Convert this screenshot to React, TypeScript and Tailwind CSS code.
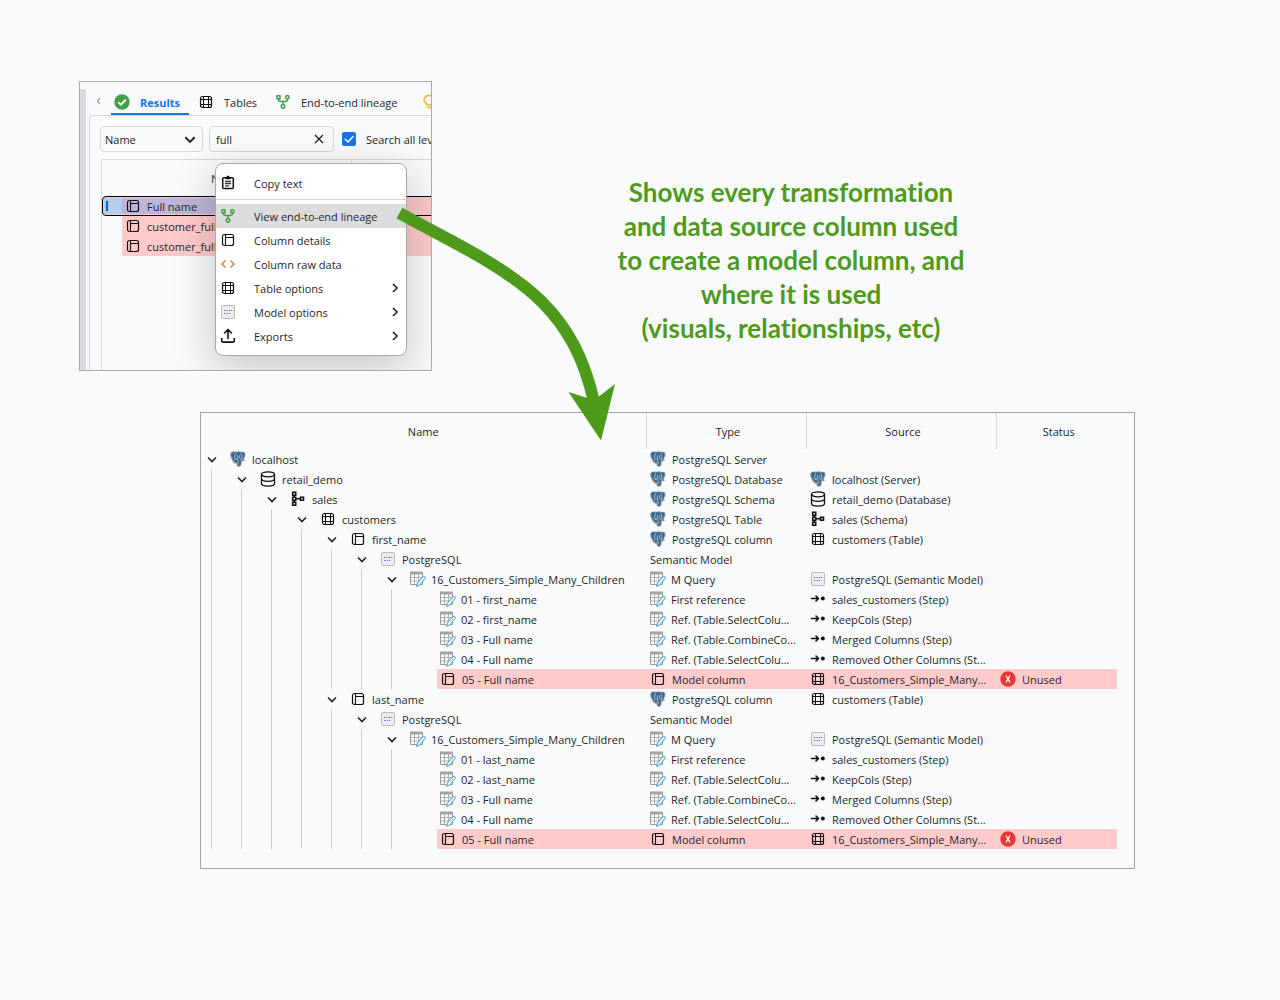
import React, { useState } from "react";

type IconName =
  | "postgres" | "database" | "schema" | "table" | "column" | "model"
  | "query" | "step" | "unused" | "clipboard" | "lineage" | "code" | "export";

function Icon({ name }: { name: IconName }) {
  const line = { fill: "none", stroke: "#111", strokeWidth: 1.3, strokeLinecap: "round" as const, strokeLinejoin: "round" as const };
  if (name === "postgres") {
    return (
      <svg viewBox="0 0 16 16" className="size-4 shrink-0" aria-hidden="true">
        <path d="M1 1.5C2.4.2 4.600.2 6 .8 8 .1 10 .1 11.300.9 13.300.3 15.300 1 15.400 3c0 2-1 4-1.900 5.400.8.3 1.800.2 1.500.8-.7 1-2.300 1.300-3.300.9-.1 2 .1 5.200-2.200 5.600-2.300.4-2.900-1-3.100-3.100-.9.3-1.800.1-2.300-.6C2.400 10.500.2 6 .2 3.800.2 2.900.4 2 1 1.500Z" fill="#8d9499" />
        <path d="M1.500 2.100c1.300-1.200 3-.9 4.300-.3C7.800 1 9.700 1 11.100 1.800c1.500-.5 3.300-.2 3.400 1.400.1 1.800-1.100 4.200-2.200 5.700-1.300.2-1.600.8-1.600 1.500 0 2 0 4.200-1.400 4.400-1.600.2-1.900-1-2-3.900-.7.5-1.700.7-2.100.2C3.600 8.900 1.200 5.700 1.200 3.600c0-.6 0-1.200.3-1.500Z" fill="#336791" />
        <path d="M5.600 2.200C4.300 4.200 4.800 7 4.900 8.400M7.500 4.200v2.600c0 1.200-1 1.800-2.400 1.700M10.600 2.200c1.600 1.700 1.500 4.200.9 6.300M7.500 7.400c.6 1.400.4 4.300.8 5.900M9.500 4.300c-.1 1.900.1 3.300 1.400 4.400" fill="none" stroke="#c4d1dc" strokeWidth=".8" />
      </svg>
    );
  }
  if (name === "database") {
    return (
      <svg viewBox="0 0 16 16" className="size-4 shrink-0" aria-hidden="true">
        <g {...line}>
          <ellipse cx="8" cy="3.300" rx="6.500" ry="2.500" />
          <path d="M1.500 3.300v9.200c0 1.400 2.900 2.600 6.500 2.600s6.500-1.200 6.500-2.600V3.300M1.500 7.800c0 1.400 2.900 2.500 6.500 2.500s6.500-1.100 6.500-2.500" />
        </g>
      </svg>
    );
  }
  if (name === "schema") {
    return (
      <svg viewBox="0 0 16 16" className="size-4 shrink-0" aria-hidden="true">
        <g {...line} strokeWidth={1.600} strokeLinejoin="miter">
          <path d="M2.700 1.300h3v3h-3zM2.700 6.300h3v3h-3zM2.700 11.300h3v3h-3zM10.500 6.300h3v3h-3zM4.200 4.300v2M4.200 9.300v2M5.700 7.800h4.800" />
        </g>
      </svg>
    );
  }
  if (name === "table") {
    return (
      <svg viewBox="0 0 16 16" className="size-4 shrink-0" aria-hidden="true">
        <rect x="2.500" y="2.500" width="11" height="11" rx="2" {...line} strokeWidth={1.200} />
        <path d="M5.500 2.500v11M10.500 2.500v11M2.500 5.500h11M2.500 10.500h11" {...line} strokeWidth={1} />
      </svg>
    );
  }
  if (name === "column") {
    return (
      <svg viewBox="0 0 16 16" className="size-4 shrink-0" aria-hidden="true">
        <rect x="2.500" y="2.500" width="11" height="11" rx="2" {...line} strokeWidth={1.200} />
        <path d="M5.500 2.500v11M5.500 5.500h8" {...line} strokeWidth={1.100} />
      </svg>
    );
  }
  if (name === "model") {
    return (
      <svg viewBox="0 0 16 16" className="size-4 shrink-0" aria-hidden="true">
        <rect x="1.500" y="1.500" width="13" height="13" rx="1.500" fill="#ededee" stroke="#bcbcbe" />
        <path d="M4 6.500h1.200M6.500 6.500h1.200M9 6.500h1.200M11.200 6.500h1M4 9.500h1.200M6.500 9.500h1.200M9 9.500h1.200" stroke="#6a55c0" strokeWidth="1.200" />
      </svg>
    );
  }
  if (name === "query") {
    return (
      <svg viewBox="0 0 16 16" className="size-4 shrink-0" aria-hidden="true">
        <path d="M.5 1.500h12v12H.5z" fill="#fff" stroke="#9a9a9a" />
        <path d="M0 .5h13v3H0z" fill="#a3a3a3" />
        <path d="M4.500 3v10.500M8.500 3v10.500M.5 6.500h12M.5 10h12" stroke="#a5a5a5" strokeWidth=".9" />
        <path d="m6.600 15.400.7-3.200 5.800-6.800c.8-.8 2.900.6 2.100 1.800l-5.700 7.100Z" fill="#e6f5fc" stroke="#3f9fcb" />
      </svg>
    );
  }
  if (name === "step") {
    return (
      <svg viewBox="0 0 16 16" className="size-4 shrink-0" aria-hidden="true">
        <path d="M1.500 7.500h7M6 5 8.500 7.500 6 10" {...line} strokeWidth={1.600} />
        <circle cx="12.800" cy="7.500" r="2" fill="#111" />
      </svg>
    );
  }
  if (name === "unused") {
    return (
      <svg viewBox="0 0 16 16" className="size-4 shrink-0" aria-hidden="true">
        <circle cx="8" cy="8" r="7.700" fill="#e53935" />
        <path d="m6 4.500 4 7M10 4.500l-4 7" stroke="#fff" strokeWidth="1.300" />
      </svg>
    );
  }
  if (name === "clipboard") {
    return (
      <svg viewBox="0 0 16 16" className="size-4 shrink-0" aria-hidden="true">
        <rect x="2.700" y="2.800" width="10.600" height="10.800" rx="1" {...line} strokeWidth={1.500} />
        <path d="M5.500 1.800h5v2.400h-5zM7 .8h2v2H7z" fill="#111" />
        <path d="M5 6.300h6M5 8.500h6M5 10.800h4" stroke="#333" strokeWidth="1.300" />
      </svg>
    );
  }
  if (name === "lineage") {
    return (
      <svg viewBox="0 0 16 16" className="size-4 shrink-0" aria-hidden="true">
        <g fill="none" stroke="#43a047" strokeWidth="1.500">
          <path d="M2 1.700h3v3H2zM3.500 4.700v.8c0 1.500 1 2 2.300 2h4.400c1.300 0 2.300-.5 2.300-2v-.8M8 7.500v3" />
          <circle cx="12.300" cy="3.200" r="1.700" />
          <circle cx="8" cy="12.300" r="1.800" />
        </g>
      </svg>
    );
  }
  if (name === "code") {
    return (
      <svg viewBox="0 0 16 16" className="size-4 shrink-0" aria-hidden="true">
        <path d="M5.500 4.500 2 8l3.500 3.500M10.500 4.500 14 8l-3.500 3.500" fill="none" stroke="#d9833b" strokeWidth="1.500" />
      </svg>
    );
  }
  return (
    <svg viewBox="0 0 16 16" className="size-4 shrink-0" aria-hidden="true">
      <path d="M8 10.500V1.800M4.500 5 8 1.500 11.500 5M1.700 10.500v2.200c0 .9.500 1.400 1.400 1.400h9.800c.9 0 1.400-.5 1.400-1.400v-2.200" {...line} strokeWidth={1.600} />
    </svg>
  );
}

function Chevron({ dir, size }: { dir: "down" | "right" | "left"; size: "sm" | "md" }) {
  const d = dir === "down" ? "M2 4.500 6 8.500 10 4.500" : dir === "right" ? "M4 2 8 6 4 10" : "M7 3 4.500 6 7 9";
  return (
    <svg viewBox="0 0 12 12" className={size === "sm" ? "size-3 shrink-0" : "size-3.5 shrink-0"} aria-hidden="true">
      <path d={d} fill="none" stroke={dir === "left" ? "#8a8a8a" : "#222"} strokeWidth={dir === "left" ? 1.1 : 1.600} />
    </svg>
  );
}

type Entry = { icon?: IconName; text: string };
type Row = { depth: number; name: Entry; type: Entry; source?: Entry; unused?: boolean };

function branch(column: string): Row[] {
  const step = (n: string, type: string, source: string): Row => ({
    depth: 7,
    name: { icon: "query", text: n },
    type: { icon: "query", text: type },
    source: { icon: "step", text: source },
  });
  return [
    { depth: 4, name: { icon: "column", text: column }, type: { icon: "postgres", text: "PostgreSQL column" }, source: { icon: "table", text: "customers (Table)" } },
    { depth: 5, name: { icon: "model", text: "PostgreSQL" }, type: { text: "Semantic Model" } },
    { depth: 6, name: { icon: "query", text: "16_Customers_Simple_Many_Children" }, type: { icon: "query", text: "M Query" }, source: { icon: "model", text: "PostgreSQL (Semantic Model)" } },
    step(`01 - ${column}`, "First reference", "sales_customers (Step)"),
    step(`02 - ${column}`, "Ref. (Table.SelectColu...", "KeepCols (Step)"),
    step("03 - Full name", "Ref. (Table.CombineCo...", "Merged Columns (Step)"),
    step("04 - Full name", "Ref. (Table.SelectColu...", "Removed Other Columns (St..."),
    { depth: 7, name: { icon: "column", text: "05 - Full name" }, type: { icon: "column", text: "Model column" }, source: { icon: "table", text: "16_Customers_Simple_Many..." }, unused: true },
  ];
}

const rows: Row[] = [
  { depth: 0, name: { icon: "postgres", text: "localhost" }, type: { icon: "postgres", text: "PostgreSQL Server" } },
  { depth: 1, name: { icon: "database", text: "retail_demo" }, type: { icon: "postgres", text: "PostgreSQL Database" }, source: { icon: "postgres", text: "localhost (Server)" } },
  { depth: 2, name: { icon: "schema", text: "sales" }, type: { icon: "postgres", text: "PostgreSQL Schema" }, source: { icon: "database", text: "retail_demo (Database)" } },
  { depth: 3, name: { icon: "table", text: "customers" }, type: { icon: "postgres", text: "PostgreSQL Table" }, source: { icon: "schema", text: "sales (Schema)" } },
  ...branch("first_name"),
  ...branch("last_name"),
];

function Label({ entry }: { entry: Entry }) {
  return (
    <span className={entry.icon === "query" ? "flex items-center gap-[5px]" : "flex items-center gap-1.5"}>
      {entry.icon && <Icon name={entry.icon} />}
      <span className="pt-px">{entry.text}</span>
    </span>
  );
}

function LineageTable() {
  return (
    <table className="w-full table-fixed border-collapse">
      <colgroup>
        <col />
        <col className="w-40" />
        <col className="w-[190px]" />
        <col className="w-[121px]" />
      </colgroup>
      <thead>
        <tr className="h-9">
          <th scope="col" className="p-0 pt-0.5 font-normal">Name</th>
          <th scope="col" className="border-l border-[#d5d7da] p-0 pt-0.5 pl-1 font-normal">Type</th>
          <th scope="col" className="border-l border-[#d5d7da] p-0 pt-0.5 pl-1 font-normal">Source</th>
          <th scope="col" className="border-l border-[#d5d7da] p-0 pt-0.5 pl-1 font-normal">Status</th>
        </tr>
      </thead>
      <tbody>
        {rows.map((row, i) => {
          const tint = row.unused ? "h-5 bg-[#ffcaca] p-0 pl-1 whitespace-nowrap" : "h-5 p-0 pl-1 whitespace-nowrap";
          return (
            <tr key={i}>
              <td className="h-5 p-0">
                <div className="flex h-5">
                  {Array.from({ length: row.depth }, (_, g) => (
                    <span key={g} className="flex w-[30px] shrink-0 pl-[10px]">
                      <span className="w-px bg-[#c9cbce]" />
                    </span>
                  ))}
                  <span className="flex w-[26px] shrink-0 items-center pl-[5px]">
                    {row.depth < 7 && (
                      <button type="button" aria-label={`Collapse ${row.name.text}`} aria-expanded="true">
                        <Chevron dir="down" size="sm" />
                      </button>
                    )}
                  </span>
                  <span className={row.unused ? "flex flex-1 items-center bg-[#ffcaca] pl-[3px] whitespace-nowrap" : "flex flex-1 items-center pl-[3px] whitespace-nowrap"}>
                    <Label entry={row.name} />
                  </span>
                </div>
              </td>
              <td className={tint}><Label entry={row.type} /></td>
              <td className={tint}>{row.source && <Label entry={row.source} />}</td>
              <td className={tint}>{row.unused && <Label entry={{ icon: "unused", text: "Unused" }} />}</td>
            </tr>
          );
        })}
      </tbody>
    </table>
  );
}

const menuItems: { icon: IconName; text: string; active?: boolean; sub?: boolean }[] = [
  { icon: "lineage", text: "View end-to-end lineage", active: true },
  { icon: "column", text: "Column details" },
  { icon: "code", text: "Column raw data" },
  { icon: "table", text: "Table options", sub: true },
  { icon: "model", text: "Model options", sub: true },
  { icon: "export", text: "Exports", sub: true },
];

function ContextMenu() {
  return (
    <div role="menu" className="absolute top-[81px] left-[135px] w-48 rounded-lg border border-[#a9a9a9] bg-white py-[7px] shadow-[0_12px_40px_4px_rgba(0,0,0,0.18)]">
      <button type="button" role="menuitem" className="flex h-6 w-full items-center gap-[18px] pl-1">
        <Icon name="clipboard" />
        <span className="pt-px">Copy text</span>
      </button>
      <hr className="mt-1 mb-1 border-[#d6d6d6]" />
      {menuItems.map((m) => (
        <button
          key={m.text}
          type="button"
          role="menuitem"
          className={m.active ? "flex h-6 w-full items-center gap-[18px] bg-[#dcdcdc] pl-1 whitespace-nowrap" : "flex h-6 w-full items-center gap-[18px] pr-[5px] pl-1 whitespace-nowrap"}
        >
          <Icon name={m.icon} />
          <span className="flex-1 pt-px text-left">{m.text}</span>
          {m.sub && <Chevron dir="right" size="sm" />}
        </button>
      ))}
    </div>
  );
}

function SearchPanel() {
  const [query, setQuery] = useState("full");
  const [all, setAll] = useState(true);
  return (
    <section aria-label="Search results" className="relative flex h-[290px] w-[353px] shrink-0 overflow-hidden border border-[#a9abae]">
      <div className="mt-[7px] w-1.5 shrink-0 bg-[#d9dadd]" />
      <div className="ml-[3px] flex shrink-0 flex-col">
        <div role="tablist" className="flex h-[33px] shrink-0 items-end whitespace-nowrap">
          <button type="button" aria-label="Scroll tabs left" className="mr-1.5 mb-2 ml-1">
            <Chevron dir="left" size="sm" />
          </button>
          <button type="button" role="tab" aria-selected="true" className="flex h-6 w-[78px] items-center gap-2.5 border-b-2 border-[#1a73e8] pl-[3px] font-bold text-[#1a73e8]">
            <svg viewBox="0 0 16 16" className="size-4 shrink-0" aria-hidden="true">
              <circle cx="8" cy="8" r="7.700" fill="#43a047" />
              <path d="m4.300 8.200 2.600 2.500 4.800-5" fill="none" stroke="#fff" strokeWidth="2" />
            </svg>
            <span className="pt-px">Results</span>
          </button>
          <button type="button" role="tab" aria-selected="false" className="flex h-6 w-[78px] items-center gap-2.5 pb-0.5 pl-[9px]">
            <Icon name="table" />
            <span className="pt-px">Tables</span>
          </button>
          <button type="button" role="tab" aria-selected="false" className="flex h-6 w-[148px] items-center gap-2.5 pb-0.5 pl-2">
            <Icon name="lineage" />
            <span className="pt-px">End-to-end lineage</span>
          </button>
          <button type="button" role="tab" aria-selected="false" aria-label="Tips" className="flex h-6 items-center pb-0.5 pl-1.5">
            <svg viewBox="0 0 16 16" className="size-4" aria-hidden="true">
              <path d="M6 11c0-1.600-3-2.400-3-5.200A4.600 4.600 0 0 1 8 1.500a4.600 4.600 0 0 1 5 4.300C13 8.600 10 9.400 10 11ZM6 13.500h4" fill="none" stroke="#f5b72e" strokeWidth="1.500" />
            </svg>
          </button>
        </div>
        <div className="w-[420px] flex-1 rounded-tl border-t border-l border-[#d5d7da] pt-2.5 pl-2.5">
          <div className="flex h-[26px] items-center whitespace-nowrap">
            <div className="relative h-full w-[103px]">
              <select aria-label="Search field" defaultValue="Name" className="h-full w-full appearance-none rounded border border-[#d5d7da] bg-transparent pt-px pl-1">
                <option>Name</option>
              </select>
              <span className="pointer-events-none absolute top-1.5 right-1.5">
                <Chevron dir="down" size="md" />
              </span>
            </div>
            <div className="ml-1.5 flex h-full w-[125px] items-center rounded border border-[#d5d7da] pr-2 pl-1.5">
              <input aria-label="Search text" value={query} onChange={(e) => setQuery(e.target.value)} className="min-w-0 flex-1 bg-transparent pt-px outline-none" />
              <button type="button" aria-label="Clear search" onClick={() => setQuery("")}>
                <svg viewBox="0 0 12 12" className="size-3" aria-hidden="true">
                  <path d="m2 2 8 8M10 2l-8 8" stroke="#222" strokeWidth="1.400" />
                </svg>
              </button>
            </div>
            <label className="relative ml-2 flex items-center gap-2.5">
              <input type="checkbox" checked={all} onChange={(e) => setAll(e.target.checked)} className="size-3.5 appearance-none rounded-xs border border-[#1a73e8] checked:bg-[#1a73e8]" />
              <svg viewBox="0 0 14 14" className="pointer-events-none absolute left-0 size-3.5" aria-hidden="true">
                <path d="m3 7 3 3 5.500-6" fill="none" stroke="#fff" strokeWidth="1.500" />
              </svg>
              <span className="pt-px">Search all levels</span>
            </label>
          </div>
          <div className="mt-[7px] ml-px h-[230px] w-[400px] border-t border-l border-[#d5d7da]">
            <div className="flex h-9">
              <div className="flex w-[250px] items-center justify-center border-r border-[#d5d7da] pt-0.5">Name</div>
            </div>
            <div className="flex h-5 rounded border border-black bg-[#fac8c8] p-px">
              <div className="flex w-[18px] items-center bg-[#b3cef0] pl-0.5">
                <span className="h-2.5 w-0.5 bg-[#0067c0]" />
              </div>
              <div className="flex w-[230px] items-center bg-[#bdb5d8] pl-[3px]">
                <Label entry={{ icon: "column", text: "Full name" }} />
              </div>
            </div>
            {["customer_full_name", "customer_full_name"].map((t, i) => (
              <div key={i} className="ml-5 flex h-5 items-center bg-[#ffcaca] pl-[3px]">
                <Label entry={{ icon: "column", text: t }} />
              </div>
            ))}
          </div>
        </div>
      </div>
      <ContextMenu />
    </section>
  );
}

export default function App() {
  return (
    <main className="relative min-h-screen bg-[#f8fafc] pt-[81px] pr-[145px] pb-20 pl-[79px] font-['Open_Sans','Segoe_UI',sans-serif] text-[11px] leading-4 text-[#1f1f1f]">
      <div className="flex items-start">
        <SearchPanel />
        <h1 className="mt-[94px] ml-[183px] w-[352px] text-center font-['Lato','Calibri',sans-serif] text-[26px] leading-[34px] font-bold whitespace-nowrap text-[#4e9a1b] [font-variant-ligatures:none]">
          Shows every transformation
          <br />
          and data source column used
          <br />
          to create a model column, and
          <br />
          where it is used
          <br />
          (visuals, relationships, etc)
        </h1>
      </div>
      <section aria-label="Column lineage" className="mt-[41px] ml-[121px] border border-[#a0a2a5] pr-[17px] pb-[19px]">
        <LineageTable />
      </section>
      <svg viewBox="390 200 235 245" className="pointer-events-none absolute top-[200px] left-[390px] h-[245px] w-[235px]" aria-hidden="true">
        <path d="M399.500 213C440 236 505 265 542 302C567 327 584 357 594 402" fill="none" stroke="#4e9a1b" strokeWidth="12" />
        <path d="m568.500 392 19 6 12-2 15.500-12-14 56.500Z" fill="#4e9a1b" />
      </svg>
    </main>
  );
}
